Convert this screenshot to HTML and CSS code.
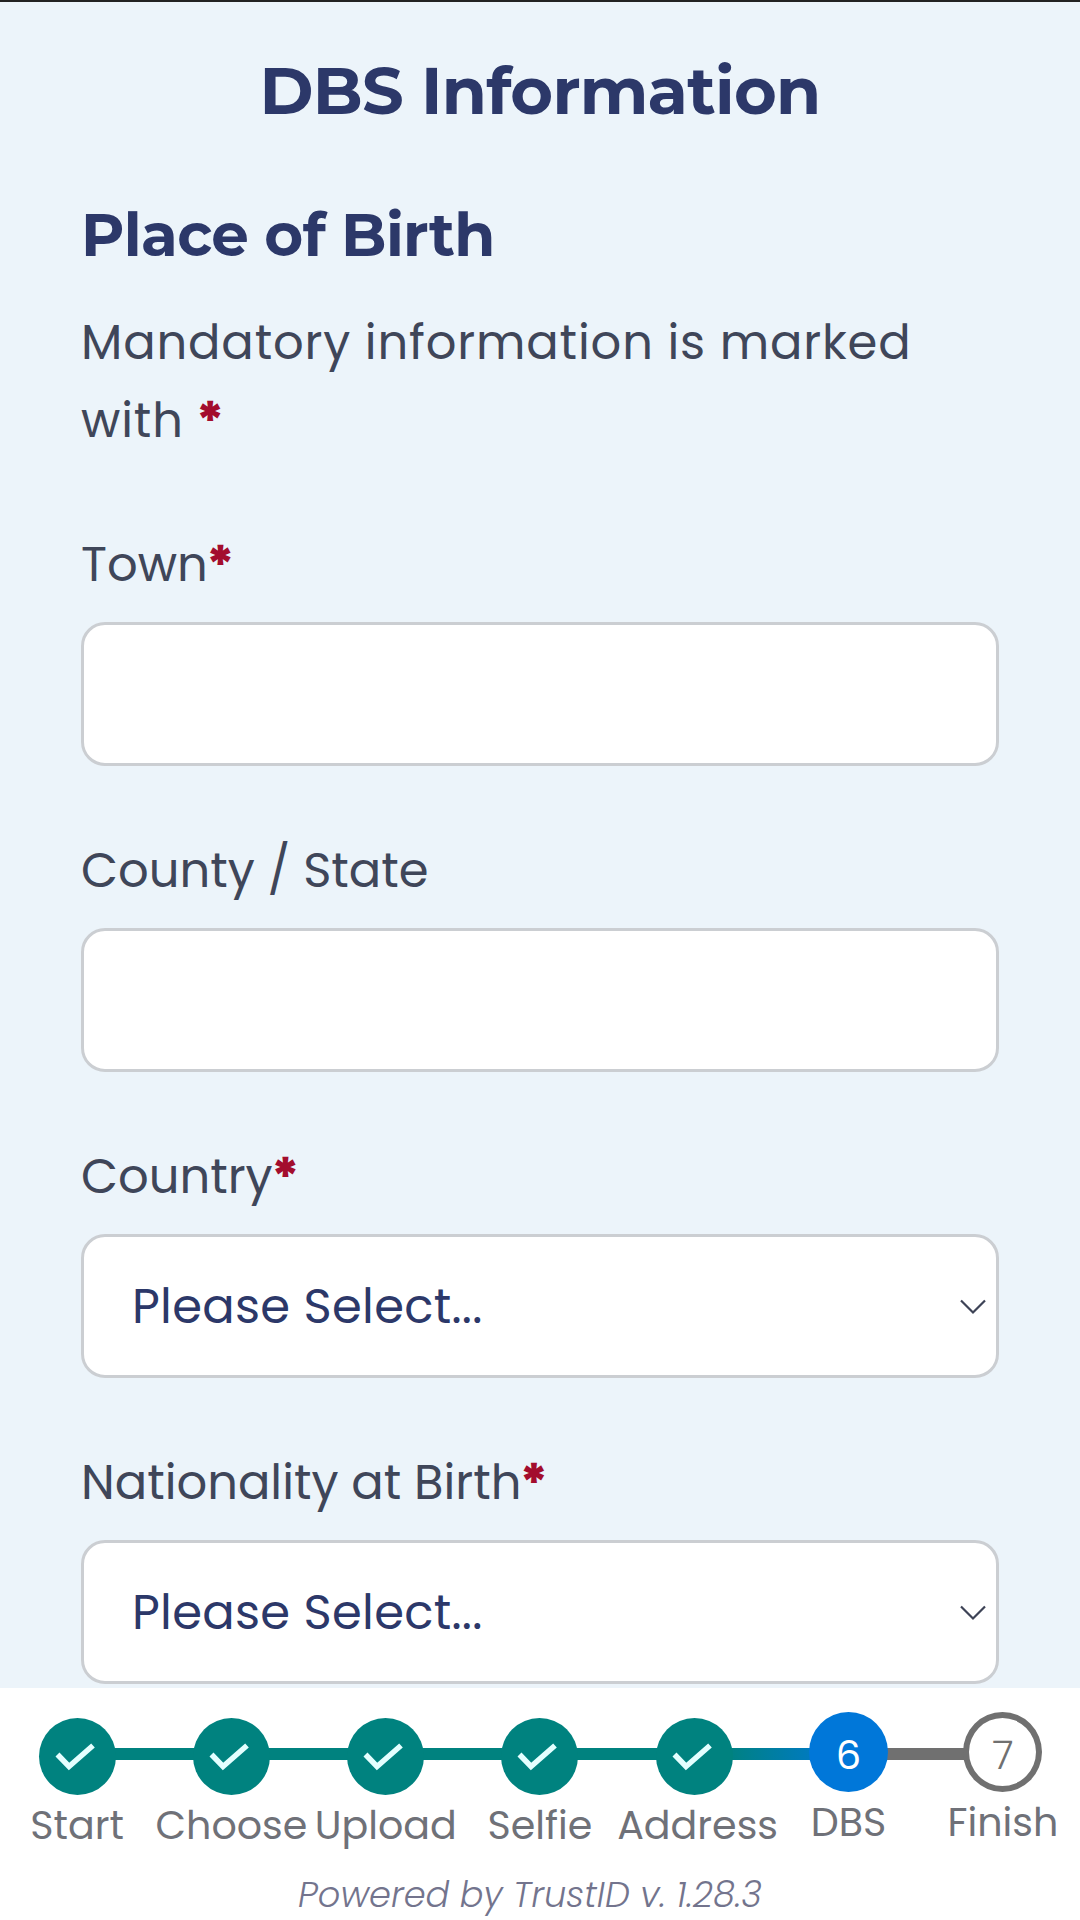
FILE: index.html
```html
<!DOCTYPE html>
<html lang="en">
<head>
  <meta charset="UTF-8">
  <title>DBS Information</title>
  <link rel="stylesheet" href="styles.css">
</head>
<body>
  <main class="page">
    <h1>DBS Information</h1>
    <form class="form">
      <h2>Place of Birth</h2>
      <p class="hint">Mandatory information is marked with <span class="req">*</span></p>

      <div class="field">
        <label for="town">Town<span class="req">*</span></label>
        <input id="town" type="text">
      </div>
      <div class="field">
        <label for="county">County / State</label>
        <input id="county" type="text">
      </div>
      <div class="field">
        <label for="country">Country<span class="req">*</span></label>
        <div class="select">
          <select id="country"><option>Please Select...</option></select>
          <svg class="arrow" viewBox="0 0 26 16"><path d="M1 1.5L13 13.5L25 1.5"/></svg>
        </div>
      </div>
      <div class="field">
        <label for="nationality">Nationality at Birth<span class="req">*</span></label>
        <div class="select">
          <select id="nationality"><option>Please Select...</option></select>
          <svg class="arrow" viewBox="0 0 26 16"><path d="M1 1.5L13 13.5L25 1.5"/></svg>
        </div>
      </div>
    </form>
  </main>

  <footer>
    <div class="steps">
      <div class="step done">
        <div class="dot"><svg viewBox="0 0 77 77"><path d="M18.5 36.5L30 48.5L54 27.5"/></svg></div>
        <span class="name">Start</span>
      </div>
      <div class="step done">
        <div class="dot"><svg viewBox="0 0 77 77"><path d="M18.5 36.5L30 48.5L54 27.5"/></svg></div>
        <span class="name">Choose</span>
      </div>
      <div class="step done">
        <div class="dot"><svg viewBox="0 0 77 77"><path d="M18.5 36.5L30 48.5L54 27.5"/></svg></div>
        <span class="name">Upload</span>
      </div>
      <div class="step done">
        <div class="dot"><svg viewBox="0 0 77 77"><path d="M18.5 36.5L30 48.5L54 27.5"/></svg></div>
        <span class="name">Selfie</span>
      </div>
      <div class="step done">
        <div class="dot"><svg viewBox="0 0 77 77"><path d="M18.5 36.5L30 48.5L54 27.5"/></svg></div>
        <span class="name">Address</span>
      </div>
      <div class="step active">
        <div class="dot">6</div>
        <span class="name">DBS</span>
      </div>
      <div class="step todo">
        <div class="dot">7</div>
        <span class="name">Finish</span>
      </div>
    </div>
    <div class="powered">Powered by TrustID v. 1.28.3</div>
  </footer>
</body>
</html>
```
FILE: styles.css
```css
* { box-sizing: border-box; }
body {
  margin: 0; height: 1920px; overflow: hidden;
  display: flex; flex-direction: column;
  background: #fff; color: #3f4659;
  font-family: Poppins, Inter, sans-serif; font-size: 48px;
}
.page { height: 1688px; border-top: 2px solid #222; background: #ecf4fa; padding: 49px 81px 0; }
h1, h2 { margin: 0; color: #2c3869; font-family: Montserrat, Inter, sans-serif; font-weight: 700; }
h1 { font-size: 65.4px; line-height: 80px; text-align: center; letter-spacing: -0.7px; }
h2 { margin-top: 69px; font-size: 59.5px; line-height: 70px; letter-spacing: -0.7px; }
.hint { margin: 34px 0 69px; line-height: 78px; letter-spacing: 0.85px; }
.req { color: #a30d2d; -webkit-text-stroke: 2.2px #a30d2d; margin-left: 1px; }

.field { margin-bottom: 69px; }
label { display: block; height: 72px; line-height: 72px; margin-bottom: 21px; }
input, select {
  display: block; width: 100%; height: 144px;
  border: 3px solid #cbced2; border-radius: 24px; background: #fff;
  font: inherit; color: #2c3869; outline: none;
}
select { appearance: none; padding: 0 48px; grid-area: 1 / 1; letter-spacing: 0.3px; }
.select { display: grid; align-items: center; }
.arrow {
  grid-area: 1 / 1; justify-self: end; width: 26px; height: 16px; margin: 1px 13px 0 0;
  fill: none; stroke: #3d4356; stroke-width: 2.2; pointer-events: none;
}

footer { height: 232px; background: #fff; }
.steps { display: grid; grid-template-columns: repeat(7, minmax(0, 1fr)); height: 160px; }
.step { position: relative; display: flex; flex-direction: column; align-items: safe center; padding-top: 30px; }
/* bar to the previous step, runs under both dots */
.step + .step::before {
  content: ""; position: absolute; top: 60px; right: 50%;
  width: 100%; height: 12px; background: #00827f;
}
.step.active::before { background: linear-gradient(90deg, #00827f 20%, #0077d9 100%); }
.step.todo::before { background: #707070; }
.dot {
  position: relative; z-index: 1; width: 77px; height: 77px; flex: none; border-radius: 50%;
  display: flex; align-items: center; justify-content: center;
  background: #00827f; font-size: 40px;
}
.dot svg { width: 77px; height: 77px; fill: none; stroke: #e4ffff; stroke-width: 5.5; }
.active, .todo { padding-top: 24px; }
.active .dot, .todo .dot { width: 79px; height: 80px; padding-top: 6px; }
.active .dot { background: #0077d9; color: #fff; }
.todo .dot { background: #fff; border: 6px solid #707070; color: #707070; font-weight: 300; }
.name { margin-top: 6px; font-size: 39.6px; line-height: 48px; color: #6f7178; white-space: nowrap; }
.powered { font-size: 35.2px; line-height: 46px; font-style: italic; font-weight: 300; color: #73748d; padding-left: 298px; margin-top: 24px; }
```
